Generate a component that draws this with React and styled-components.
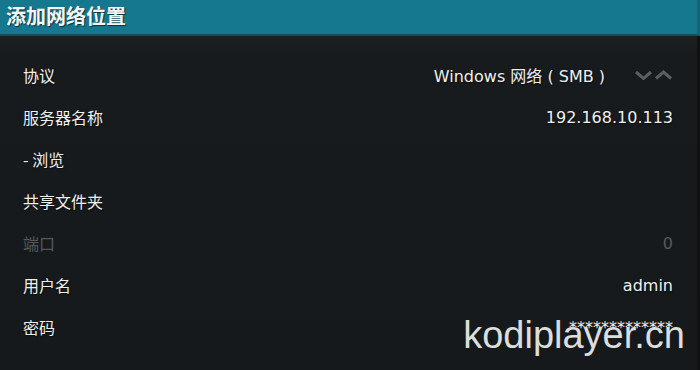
import React from "react";
import styled, { createGlobalStyle } from "styled-components";

const Global = createGlobalStyle`
  html, body { margin: 0; padding: 0; background: #16191b; }
  body { width: 700px; height: 370px; overflow: hidden; }
`;

const Page = styled.div`
  position: relative;
  width: 700px;
  height: 370px;
  display: flex;
  flex-direction: column;
  background: #16191b;
  font-family: "DejaVu Sans", "Noto Sans CJK SC", sans-serif;
  overflow: hidden;
`;

const Header = styled.header`
  height: 34px;
  flex: none;
  display: flex;
  align-items: center;
  padding: 0 6px;
  background: #16788f;
  border-bottom: 2px solid #0e4f5e;
  border-right: 3px solid #126476;
`;

const Title = styled.h1`
  margin: 0;
  font-family: "Noto Sans CJK SC", "DejaVu Sans", sans-serif;
  font-size: 20px;
  font-weight: 700;
  color: #f4f6f6;
  text-shadow: 1px 1px 1px rgba(0, 0, 0, 0.6);
  line-height: 1;
  margin-top: -2px;
`;

const Body = styled.main`
  flex: 1;
  display: flex;
  flex-direction: column;
  padding-top: 18px;
  background: linear-gradient(#1c2022 0, #181b1d 20px, #16191b 100%);
  border-right: 3px solid #0f1112;
`;

const Row = styled.div`
  height: 42px;
  display: flex;
  align-items: center;
  justify-content: space-between;
  padding: 0 24px 0 23px;
  color: ${(p) => (p.$disabled ? "#55595b" : "#eef0f0")};
  font-size: 16px;
  text-shadow: ${(p) => (p.$disabled ? "none" : "1px 1px 1px rgba(0,0,0,0.5)")};
`;

const Label = styled.span`
  font-family: "Noto Sans CJK SC", "DejaVu Sans", sans-serif;
  font-size: 16px;
`;

const Value = styled.span`
  display: flex;
  align-items: center;
  gap: 30px;
  font-family: "DejaVu Sans", "Noto Sans CJK SC", sans-serif;
  font-size: 16px;
`;

const Spinner = styled.svg`
  display: block;
  width: 38px;
  height: 10px;
`;

const Watermark = styled.div`
  position: absolute;
  right: 15px;
  top: 316px;
  font-family: "Liberation Sans", Arial, sans-serif;
  font-size: 38px;
  line-height: 38px;
  color: #dcdddd;
  pointer-events: none;
`;

const rows = [
  { label: "协议", value: "Windows 网络 ( SMB )", spin: true },
  { label: "服务器名称", value: "192.168.10.113" },
  { label: "- 浏览", value: "" },
  { label: "共享文件夹", value: "" },
  { label: "端口", value: "0", disabled: true },
  { label: "用户名", value: "admin" },
  { label: "密码", value: "*************" },
];

export default function App() {
  return (
    <>
      <Global />
      <Page>
        <Header>
          <Title>添加网络位置</Title>
        </Header>
        <Body>
          {rows.map((r) => (
            <Row key={r.label} $disabled={r.disabled}>
              <Label>{r.label}</Label>
              <Value>
                {r.value}
                {r.spin && (
                  <Spinner viewBox="0 0 38 10">
                    <path d="M1 2 L8.5 8.5 L16 2" fill="none" stroke="#5a5e60" strokeWidth="3" />
                    <path d="M21 8.5 L28.5 2 L36 8.5" fill="none" stroke="#5a5e60" strokeWidth="3" />
                  </Spinner>
                )}
              </Value>
            </Row>
          ))}
        </Body>
        <Watermark>kodiplayer.cn</Watermark>
      </Page>
    </>
  );
}
